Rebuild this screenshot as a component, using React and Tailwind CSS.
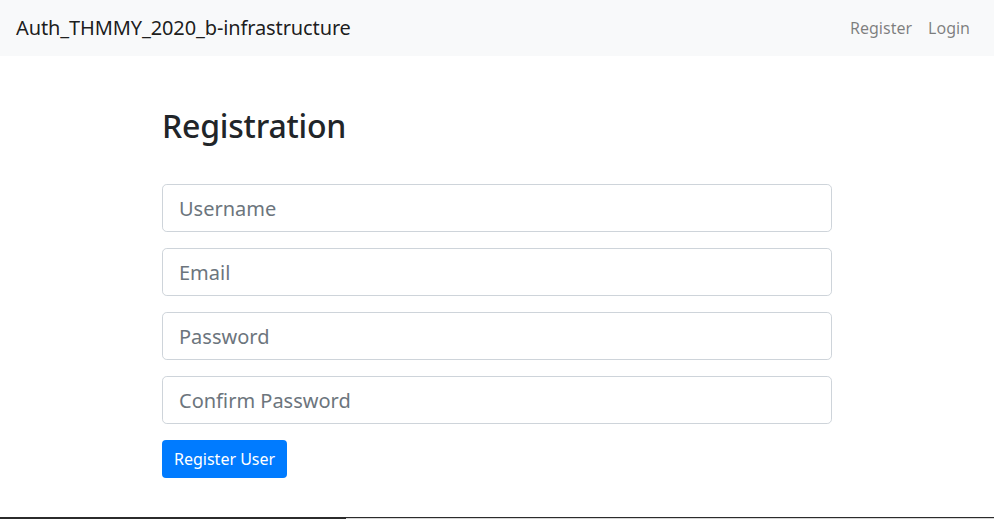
import { useState } from 'react';

const font = { fontFamily: '"Noto Sans", "Open Sans", sans-serif' };

function Field({ type, placeholder, value, onChange }) {
  return (
    <input
      type={type}
      value={value}
      onChange={onChange}
      placeholder={placeholder}
      className="block w-full h-12 px-4 py-2 text-xl leading-normal text-[#495057] bg-white border border-[#ced4da] rounded-[4.8px] placeholder:text-[#6c757d] outline-none"
    />
  );
}

export default function App() {
  const [form, setForm] = useState({ username: '', email: '', password: '', confirm: '' });

  const set = (key) => (e) => setForm({ ...form, [key]: e.target.value });

  return (
    <div style={font} className="h-[519px] flex flex-col bg-white text-[#212529] overflow-hidden">
      {/* Navbar */}
      <nav className="h-14 shrink-0 flex items-center justify-between px-4 bg-[#f8f9fa]">
        <a className="text-xl leading-[30px] tracking-[-0.12px] text-black/90">Auth_THMMY_2020_b-infrastructure</a>
        <div className="flex">
          <a className="px-2 py-2 text-base leading-6 text-black/50">Register</a>
          <a className="px-2 py-2 text-base leading-6 text-black/50">Login</a>
        </div>
      </nav>

      {/* Form */}
      <div className="flex-1 flex justify-center">
        <div className="w-[670px] pt-[51px]">
          <h2 className="text-[32px] leading-[38px] font-medium tracking-[-0.2px] mb-[39px]">Registration</h2>
          <div className="flex flex-col gap-4">
            <Field type="text" placeholder="Username" value={form.username} onChange={set('username')} />
            <Field type="email" placeholder="Email" value={form.email} onChange={set('email')} />
            <Field type="password" placeholder="Password" value={form.password} onChange={set('password')} />
            <Field type="password" placeholder="Confirm Password" value={form.confirm} onChange={set('confirm')} />
            <div>
              <button className="h-[38px] px-3 text-base leading-6 text-white bg-[#007bff] rounded">
                Register User
              </button>
            </div>
          </div>
        </div>
      </div>

      {/* bottom edge */}
      <div className="shrink-0 h-px bg-[#2b2b2b]" />
      <div className="shrink-0 h-px flex">
        <div className="w-[346px] bg-[#2b2b2b]" />
        <div className="flex-1 bg-[#d6d6d6]" />
      </div>
    </div>
  );
}
